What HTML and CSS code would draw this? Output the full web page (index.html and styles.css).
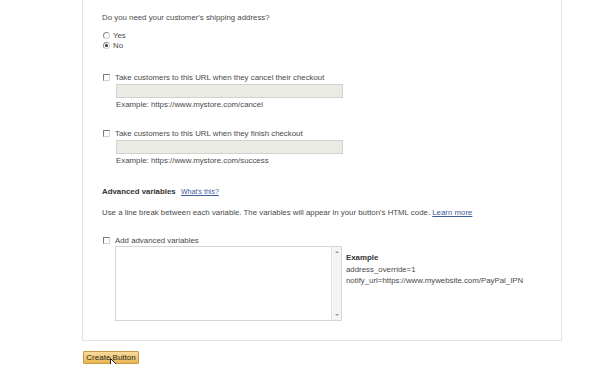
FILE: index.html
```html
<!DOCTYPE html>
<html lang="en">
<head>
    <meta charset="UTF-8">
    <title>Create Button - Step 3</title>
    <link rel="stylesheet" href="styles.css">
</head>
<body>
    <div class="panel">
        <div class="question">Do you need your customer's shipping address?</div>
        <div class="radios">
            <div class="radio-row"><span class="radio"></span>Yes</div>
            <div class="radio-row"><span class="radio checked"></span>No</div>
        </div>

        <div class="option first">
            <div class="check-row"><span class="checkbox"></span>Take customers to this URL when they cancel their checkout</div>
            <div class="url-input"></div>
            <div class="example">Example: https://www.mystore.com/cancel</div>
        </div>

        <div class="option">
            <div class="check-row"><span class="checkbox"></span>Take customers to this URL when they finish checkout</div>
            <div class="url-input"></div>
            <div class="example">Example: https://www.mystore.com/success</div>
        </div>

        <div class="adv-title"><b>Advanced variables</b> <a href="#" class="help">What's this?</a></div>
        <div class="adv-note">Use a line break between each variable. The variables will appear in your button's HTML code. <a href="#">Learn more</a></div>

        <div class="check-row adv-check"><span class="checkbox"></span>Add advanced variables</div>
        <div class="adv-body">
            <div class="textarea">
                <div class="text-area-inner"></div>
                <div class="scrollbar">
                    <span class="arrow up"></span>
                    <span class="arrow down"></span>
                </div>
            </div>
            <div class="adv-example">
                <div class="ex-title">Example</div>
                <div>address_override=1</div>
                <div>notify_url=https://www.mywebsite.com/PayPal_IPN</div>
            </div>
        </div>
    </div>

    <div class="actions">
        <button class="create-btn">Create Button</button>
        <svg class="cursor" width="10" height="15" viewBox="0 0 10 15">
            <path d="M0.5 0.5 L0.5 11.5 L3.1 9 L5 13.5 L6.8 12.7 L5 8.5 L8.6 8.5 Z" fill="#fff" stroke="#222" stroke-width="1" stroke-linejoin="round"/>
        </svg>
    </div>
</body>
</html>
```

FILE: styles.css
```css
body {
    margin: 0;
    background-color: #ffffff;
    font-family: "Liberation Sans", Arial, sans-serif;
    font-size: 7.85px;
    line-height: 11px;
    color: #4a4a4a;
}
.panel {
    margin-left: 82px;
    width: 459px;
    padding: 12px 0 19px 19px;
    border: 1px solid #e2e2e2;
    border-top: none;
}
.radios {
    margin-top: 7px;
}
.radio-row {
    display: flex;
    align-items: center;
    height: 10px;
}
.radio {
    width: 5px;
    height: 5px;
    margin: 0 3px 0 1px;
    border: 1px solid #8a8a8a;
    border-right-color: #d0d0d0;
    border-bottom-color: #d0d0d0;
    border-radius: 50%;
    background-color: #fff;
    position: relative;
}
.radio.checked::after {
    content: "";
    position: absolute;
    left: 1px;
    top: 1px;
    width: 3px;
    height: 3px;
    border-radius: 50%;
    background-color: #333;
}
.option {
    margin-top: 18px;
}
.option.first {
    margin-top: 22px;
}
.check-row {
    display: flex;
    align-items: center;
    height: 11px;
}
.checkbox {
    width: 5px;
    height: 5px;
    margin: 0 5px 0 1px;
    border: 1px solid #7a7a7a;
    border-right-color: #d4d4d4;
    border-bottom-color: #d4d4d4;
    background-color: #fff;
}
.url-input {
    width: 225px;
    height: 12px;
    margin: 1px 0 0 14px;
    border: 1px solid #d2d2cc;
    background-color: #ebebe6;
}
.example {
    margin: 1px 0 0 14px;
}
.adv-title {
    margin-top: 20px;
    color: #333;
}
.help {
    margin-left: 3px;
    font-size: 7px;
    color: #3d5d9c;
}
.adv-note {
    margin-top: 10px;
}
.adv-note a {
    color: #3d5d9c;
}
.adv-check {
    margin-top: 17px;
}
.adv-body {
    display: flex;
}
.textarea {
    display: flex;
    width: 225px;
    height: 73px;
    margin-left: 13px;
    border: 1px solid #d6d6d6;
}
.text-area-inner {
    flex: 1;
}
.scrollbar {
    width: 9px;
    display: flex;
    flex-direction: column;
    justify-content: space-between;
    align-items: center;
    padding: 4px 0;
    background-color: #f4f4f4;
    border-left: 1px solid #e4e4e4;
}
.arrow {
    width: 0;
    height: 0;
    border-left: 2px solid transparent;
    border-right: 2px solid transparent;
}
.arrow.up {
    border-bottom: 2px solid #999;
}
.arrow.down {
    border-top: 2px solid #999;
}
.adv-example {
    margin-left: 4px;
    padding-top: 6px;
    line-height: 11.5px;
}
.ex-title {
    font-weight: bold;
    color: #333;
}
.actions {
    position: relative;
    margin: 10px 0 0 83px;
}
.create-btn {
    display: block;
    width: 56px;
    height: 13px;
    padding: 0;
    font-family: "Liberation Sans", Arial, sans-serif;
    font-size: 8px;
    color: #2a2a2a;
    background: linear-gradient(#f8dc9c, #e9b452);
    border: 1px solid #c99a44;
    border-radius: 1px;
}
.cursor {
    position: absolute;
    left: 27px;
    top: 7px;
}
```
